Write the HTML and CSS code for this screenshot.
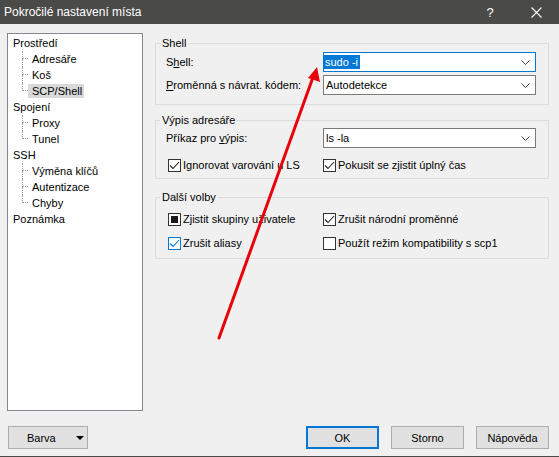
FILE: index.html
```html
<!DOCTYPE html>
<html lang="cs">
<head>
    <meta charset="UTF-8">
    <meta name="viewport" content="width=device-width, initial-scale=1.0">
    <title>Pokročilé nastavení místa</title>
    <link rel="stylesheet" href="styles.css">
</head>
<body>
    <div class="dialog">
        <div class="titlebar">
            <span class="title">Pokročilé nastavení místa</span>
            <span class="caption-btn">?</span>
            <span class="caption-btn">
                <svg width="11" height="11" viewBox="0 0 11 11"><path d="M0.5 0.5 L10.5 10.5 M10.5 0.5 L0.5 10.5" stroke="#fff" stroke-width="1.1" fill="none"/></svg>
            </span>
        </div>

        <div class="main">
            <!-- page tree -->
            <ul class="tree">
                <li>
                    <div class="node">Prostředí</div>
                    <ul class="branch">
                        <li class="leaf"><span class="twig"></span><span class="label">Adresáře</span></li>
                        <li class="leaf"><span class="twig"></span><span class="label">Koš</span></li>
                        <li class="leaf"><span class="twig"></span><span class="label selected">SCP/Shell</span></li>
                    </ul>
                </li>
                <li>
                    <div class="node">Spojení</div>
                    <ul class="branch">
                        <li class="leaf"><span class="twig"></span><span class="label">Proxy</span></li>
                        <li class="leaf"><span class="twig"></span><span class="label">Tunel</span></li>
                    </ul>
                </li>
                <li>
                    <div class="node">SSH</div>
                    <ul class="branch">
                        <li class="leaf"><span class="twig"></span><span class="label">Výměna klíčů</span></li>
                        <li class="leaf"><span class="twig"></span><span class="label">Autentizace</span></li>
                        <li class="leaf"><span class="twig"></span><span class="label">Chyby</span></li>
                    </ul>
                </li>
                <li>
                    <div class="node">Poznámka</div>
                </li>
            </ul>

            <div class="pane">
                <fieldset class="group group-shell">
                    <legend>Shell</legend>
                    <div class="field">
                        <span>S<u>h</u>ell:</span>
                        <div class="combo focused">
                            <span class="sel">sudo -i</span>
                            <svg class="chevron" width="9" height="5" viewBox="0 0 9 5"><path d="M0.5 0.5 L4.5 4.5 L8.5 0.5" stroke="#444" fill="none"/></svg>
                        </div>
                        <span><u>P</u>roměnná s návrat. kódem:</span>
                        <div class="combo">
                            <span class="value">Autodetekce</span>
                            <svg class="chevron" width="9" height="5" viewBox="0 0 9 5"><path d="M0.5 0.5 L4.5 4.5 L8.5 0.5" stroke="#444" fill="none"/></svg>
                        </div>
                    </div>
                </fieldset>

                <fieldset class="group group-list">
                    <legend>Výpis adresáře</legend>
                    <div class="field">
                        <span>Příkaz pro <u>v</u>ýpis:</span>
                        <div class="combo">
                            <span class="value">ls -la</span>
                            <svg class="chevron" width="9" height="5" viewBox="0 0 9 5"><path d="M0.5 0.5 L4.5 4.5 L8.5 0.5" stroke="#444" fill="none"/></svg>
                        </div>
                    </div>
                    <div class="checks">
                        <label class="check"><span class="box"><svg width="11" height="11" viewBox="0 0 11 11"><path d="M1 5.5 L4 8.5 L10 2" stroke="#222" stroke-width="1.1" fill="none"/></svg></span>Ignorovat varování u LS</label>
                        <label class="check"><span class="box"><svg width="11" height="11" viewBox="0 0 11 11"><path d="M1 5.5 L4 8.5 L10 2" stroke="#222" stroke-width="1.1" fill="none"/></svg></span>Pokusit se zjistit úplný čas</label>
                    </div>
                </fieldset>

                <fieldset class="group group-more">
                    <legend>Další volby</legend>
                    <div class="checks checks-more">
                        <label class="check"><span class="box"><span class="mixed"></span></span>Zjistit skupiny uživatele</label>
                        <label class="check"><span class="box"><svg width="11" height="11" viewBox="0 0 11 11"><path d="M1 5.5 L4 8.5 L10 2" stroke="#222" stroke-width="1.1" fill="none"/></svg></span>Zrušit národní proměnné</label>
                        <label class="check"><span class="box hot"><svg width="11" height="11" viewBox="0 0 11 11"><path d="M1 5.5 L4 8.5 L10 2" stroke="#0078d7" stroke-width="1.1" fill="none"/></svg></span>Zrušit aliasy</label>
                        <label class="check"><span class="box"></span>Použít režim kompatibility s scp1</label>
                    </div>
                </fieldset>
            </div>
        </div>

        <div class="footer">
            <button class="btn btn-menu">Barva <span class="drop"></span></button>
            <div class="actions">
                <button class="btn btn-default">OK</button>
                <button class="btn">Storno</button>
                <button class="btn">Nápověda</button>
            </div>
        </div>

        <!-- red pointer drawn over the dialog -->
        <svg class="pointer" width="559" height="457" viewBox="0 0 559 457">
            <line x1="219" y1="338" x2="312" y2="80" stroke="#e8000b" stroke-width="3" stroke-linecap="round"/>
            <polygon points="317,67 320,82 308,78" fill="#e8000b"/>
        </svg>
    </div>
</body>
</html>
```

FILE: styles.css
```css
body {
    margin: 0;
    background-color: #f0f0f0;
    font-family: "Liberation Sans", Arial, sans-serif;
    font-size: 11px;
    color: #000;
}
.dialog {
    position: relative;
    height: 456px;
    border-bottom: 1px solid #4a4a48;
}
.titlebar {
    height: 24px;
    background-color: #4a4a48;
    color: #fff;
    display: flex;
    align-items: center;
    padding-left: 4px;
    font-size: 12px;
}
.title {
    flex: 1;
}
.caption-btn {
    width: 46px;
    height: 24px;
    display: flex;
    align-items: center;
    justify-content: center;
    font-size: 13px;
}
.main {
    display: flex;
    padding: 9px 10px 0 7px;
}

/* tree on the left */
.tree, .branch {
    list-style: none;
    margin: 0;
    padding: 0;
}
.tree {
    width: 136px;
    height: 378px;
    box-sizing: border-box;
    border: 1px solid #828790;
    background-color: #fff;
    padding-top: 1px;
}
.node {
    padding-left: 5px;
    line-height: 16px;
}
.branch {
    margin-left: 14px;
}
.leaf {
    display: flex;
    height: 16px;
}
.twig {
    width: 6px;
    display: flex;
    flex-direction: column;
}
.twig::before {
    content: "";
    height: 7px;
    border-left: 1px dotted #a0a0a0;
    border-bottom: 1px dotted #a0a0a0;
}
.twig::after {
    content: "";
    flex: 1;
    border-left: 1px dotted #a0a0a0;
}
.leaf:last-child .twig::after {
    border-left-color: transparent;
}
.label {
    align-self: center;
    line-height: 14px;
    padding: 0 2px 0 4px;
}
.label.selected {
    background-color: #d9d9d9;
}

/* option groups */
.pane {
    margin-left: 12px;
    margin-top: 3px;
    width: 394px;
}
.group {
    margin: 0;
    padding: 2px 11px 9px 10px;
    border: 1px solid #dcdcdc;
    min-width: 0;
}
.group legend {
    padding: 0 2px;
    margin-left: -6px;
    line-height: 14px;
}
.group-list {
    margin-top: 8px;
    padding-top: 1px;
    padding-bottom: 5px;
}
.group-more {
    margin-top: 11px;
    padding-top: 7px;
    padding-bottom: 7px;
}
.field {
    display: grid;
    grid-template-columns: 157px 213px;
    align-items: center;
    row-gap: 3px;
}
.combo {
    height: 20px;
    box-sizing: border-box;
    border: 1px solid #7a7a7a;
    background-color: #fff;
    display: flex;
    align-items: center;
    justify-content: space-between;
    padding: 0 5px 0 0;
}
.combo.focused {
    border-color: #0078d7;
}
.value {
    padding-left: 2px;
}
.sel {
    background-color: #0078d7;
    color: #fff;
    line-height: 14px;
    padding: 0 2px 0 1px;
}
.checks {
    display: grid;
    grid-template-columns: 155px auto;
    margin-top: 9px;
    padding-left: 2px;
}
.checks-more {
    margin-top: 0;
    row-gap: 8px;
}
.check {
    display: flex;
    align-items: center;
    height: 16px;
}
.box {
    width: 13px;
    height: 13px;
    box-sizing: border-box;
    border: 1px solid #333;
    background-color: #fff;
    margin-right: 2px;
    display: flex;
    align-items: center;
    justify-content: center;
}
.box.hot {
    border-color: #0078d7;
}
.mixed {
    width: 7px;
    height: 7px;
    background-color: #1a1a1a;
}

/* buttons */
.footer {
    display: flex;
    justify-content: space-between;
    padding: 15px 10px 0 8px;
}
.actions {
    display: flex;
    gap: 12px;
}
.btn {
    height: 23px;
    width: 73px;
    box-sizing: border-box;
    border: 1px solid #adadad;
    background-color: #e1e1e1;
    font-family: inherit;
    font-size: 11px;
    color: #000;
    padding: 0;
}
.btn-default {
    border: 2px solid #0078d7;
}
.btn-menu {
    width: 80px;
    display: flex;
    align-items: center;
    padding-left: 18px;
}
.drop {
    margin-left: 20px;
    width: 0;
    height: 0;
    border-left: 4px solid transparent;
    border-right: 4px solid transparent;
    border-top: 4px solid #000;
}
.pointer {
    position: absolute;
    top: 0;
    left: 0;
    pointer-events: none;
}
```
